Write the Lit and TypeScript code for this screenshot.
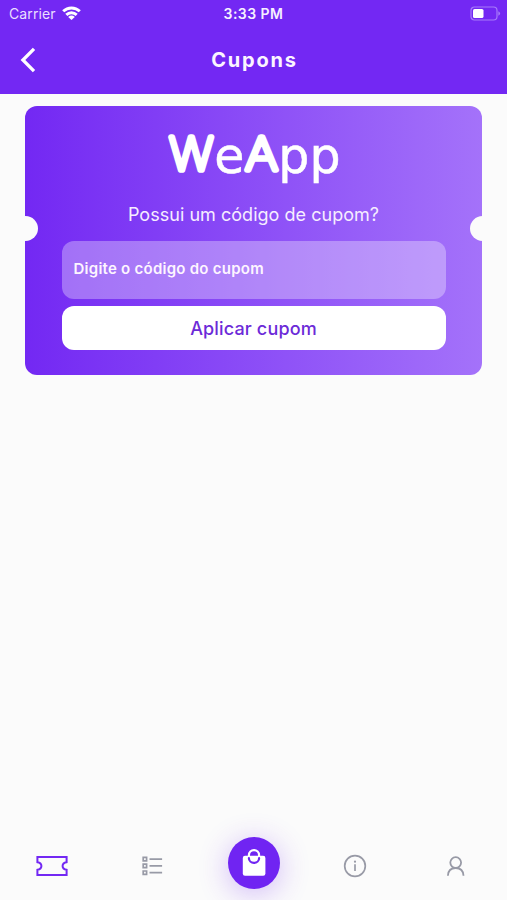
import { LitElement, html, css } from "lit";
import { customElement } from "lit/decorators.js";

@customElement("status-bar")
class StatusBar extends LitElement {
  static styles = css`
    :host { display: grid; grid-template-columns: 1fr auto 1fr; align-items: center; height: 27px; padding: 0 6px 0 9px; box-sizing: border-box; color: #fff; font-size: 14px; }
    .left { display: flex; align-items: center; gap: 6px; color: #eadfff; letter-spacing: 0.1px; }
    .time { font-size: 14px; font-weight: 600; letter-spacing: 0.45px; color: #f6f0ff; margin-left: -3px; }
    .battery { justify-self: end; }
    svg { display: block; }
  `;
  render() {
    return html`
      <div class="left"><span>Carrier</span>
        <svg width="19" height="15" viewBox="0 0 19 15" fill="none" stroke="#fff" stroke-width="2.9">
          <path d="M1.2 5.3C5.8 .8 13.2 .8 17.8 5.3M4.3 8.9C7.3 6 11.7 6 14.7 8.9" />
          <path d="M9.5 14L6.2 10.9Q9.5 8.1 12.8 10.9Z" fill="#fff" stroke="none" />
        </svg>
      </div>
      <span class="time">3:33 PM</span>
      <svg class="battery" width="31" height="15" viewBox="0 0 31 15">
        <rect x="1" y="1" width="26" height="13" rx="3.5" fill="none" stroke="#a77bfa" stroke-width="1.2" />
        <rect x="3" y="3" width="10.5" height="9" rx="1.6" fill="#fff" />
        <path d="M28.3 5.2q1.8.7 1.8 2.3t-1.8 2.3z" fill="#a77bfa" />
      </svg>`;
  }
}

@customElement("coupon-card")
class CouponCard extends LitElement {
  static styles = css`
    :host { display: flex; flex-direction: column; box-sizing: border-box; width: 457px; height: 269px; margin: 12px auto 0; padding: 6px 36.5px 0; border-radius: 12px; position: relative; background: linear-gradient(90deg, #7328f3, #a472fa); }
    .notch { position: absolute; top: 109.5px; width: 25px; height: 25px; border-radius: 50%; background: #fbfbfb; }
    .l { left: -12.5px; }
    .r { right: -12.5px; }
    .logo { display: block; align-self: center; width: 204px; height: 90px; flex: none; overflow: visible; fill: #fff; font-family: "DejaVu Sans", sans-serif; }
    .heavy { font-family: Inter, sans-serif; font-weight: 100; stroke: #fff; stroke-width: 5.6; stroke-linejoin: round; }
    .thin { stroke: #fff; stroke-width: 0.5; }
    .question { align-self: center; margin-top: 1px; line-height: 24px; font-size: 18px; letter-spacing: 0.03px; color: #f6edff; white-space: nowrap; }
    .field { display: flex; align-items: center; height: 58.5px; margin-top: 13.5px; padding: 0 12px 3px; box-sizing: border-box; border-radius: 12px; background: #ffffff52; color: #fdf5ff; font-size: 15px; font-weight: 600; letter-spacing: 0.25px; }
    .apply { display: flex; align-items: center; justify-content: center; height: 44px; flex: none; margin-top: 7px; border: 0; border-radius: 12px; background: #fff; color: #6c2ad8; font: 500 18px Inter, sans-serif; letter-spacing: 0.15px; }
  `;
  render() {
    return html`
      <i class="notch l"></i><i class="notch r"></i>
      <svg class="logo" viewBox="152 112 204 90" role="img" aria-label="WeApp">
        <text class="heavy" x="169.6" y="170.4" font-size="45" textLength="43.5" lengthAdjust="spacingAndGlyphs">W</text>
        <text class="thin" x="214.3" y="172.7" font-size="49">e</text>
        <text class="heavy" x="245.5" y="170.4" font-size="45" textLength="32" lengthAdjust="spacingAndGlyphs">A</text>
        <text class="thin" x="278.3" y="172.7" font-size="49">pp</text>
      </svg>
      <div class="question">Possui um código de cupom?</div>
      <div class="field">Digite o código do cupom</div>
      <button class="apply">Aplicar cupom</button>`;
  }
}

@customElement("tab-bar")
class TabBar extends LitElement {
  static styles = css`
    :host { display: grid; grid-template-columns: repeat(5, 101px); justify-content: center; align-items: center; height: 76px; box-sizing: border-box; }
    .tab { display: flex; justify-content: center; color: #989aa6; padding-top: 8px; }
    .active { color: #7328f3; }
    .bag { justify-self: center; display: flex; align-items: center; justify-content: center; width: 52px; height: 52px; border-radius: 50%; background: #7024f2; box-shadow: 0 5px 30px #7328f350; margin-top: 1px; }
    svg { display: block; fill: none; stroke: currentColor; }
  `;
  render() {
    return html`
      <div class="tab active"><svg width="32" height="20" viewBox="0 0 32 20" stroke-width="2"><path d="M1.4 1H30.6V6.2Q26.6 6.8 26.6 10T30.6 13.8V19H1.4V13.8Q5.4 13.2 5.4 10T1.4 6.2Z" /></svg></div>
      <div class="tab"><svg width="21" height="20" viewBox="0 0 21 20" stroke-width="1.7"><path d="M1.2 1.4h3.4v3.4H1.2zM1.2 8.2h3.4v3.4H1.2zM1.2 15h3.4v3.4H1.2zM7.5 3.1h12.6M7.5 9.9h12.6M7.5 16.7h12.6" /></svg></div>
      <div class="bag"><svg width="24" height="28" viewBox="0 0 24 28"><rect x=".8" y="6.8" width="22.6" height="20" rx="2.2" fill="#fff" stroke="none" /><path d="M6.9 7.3V6.2a5.1 5.1 0 0 1 10.2 0v1.1" stroke="#fff" stroke-width="2.2" /><path d="M6.9 9.2a5.1 4.7 0 0 0 10.2 0" stroke="#7024f2" stroke-width="2.2" stroke-linecap="round" /></svg></div>
      <div class="tab"><svg width="24" height="24" viewBox="0 0 24 24" stroke-width="1.7"><circle cx="12" cy="12" r="10.3" /><path d="M12 10.2v6.8" /><circle cx="12" cy="7.7" r="1.1" fill="currentColor" stroke="none" /></svg></div>
      <div class="tab"><svg width="18" height="20" viewBox="0 0 18 20" stroke-width="1.8"><circle cx="8.7" cy="6.6" r="5.4" /><path d="M.9 19.8C1.1 14.6 4.3 12 8.7 12s7.6 2.6 7.8 7.8" /></svg></div>`;
  }
}

@customElement("app-root")
class AppRoot extends LitElement {
  static styles = css`
    :host { display: flex; flex-direction: column; width: 507px; height: 900px; overflow: hidden; background: #fbfbfb; font-family: Inter, sans-serif; }
    header { height: 94px; flex: none; background: #7328f3; color: #fff; }
    .nav { display: grid; grid-template-columns: 1fr auto 1fr; align-items: center; height: 66px; padding: 0 20px; }
    h1 { margin: 0 -1px 0 1px; font-size: 20px; font-weight: 700; letter-spacing: 1.8px; line-height: 26px; color: #fbf5ff; }
    svg { display: block; }
    main { flex: 1; }
  `;
  render() {
    return html`
      <header>
        <status-bar></status-bar>
        <div class="nav">
          <svg width="16" height="26" viewBox="0 0 16 26" fill="none" stroke="#fff" stroke-width="3.3"><path d="M14 1.8L2.9 13L14 24.2" /></svg>
          <h1>Cupons</h1>
        </div>
      </header>
      <main><coupon-card></coupon-card></main>
      <tab-bar></tab-bar>`;
  }
}
